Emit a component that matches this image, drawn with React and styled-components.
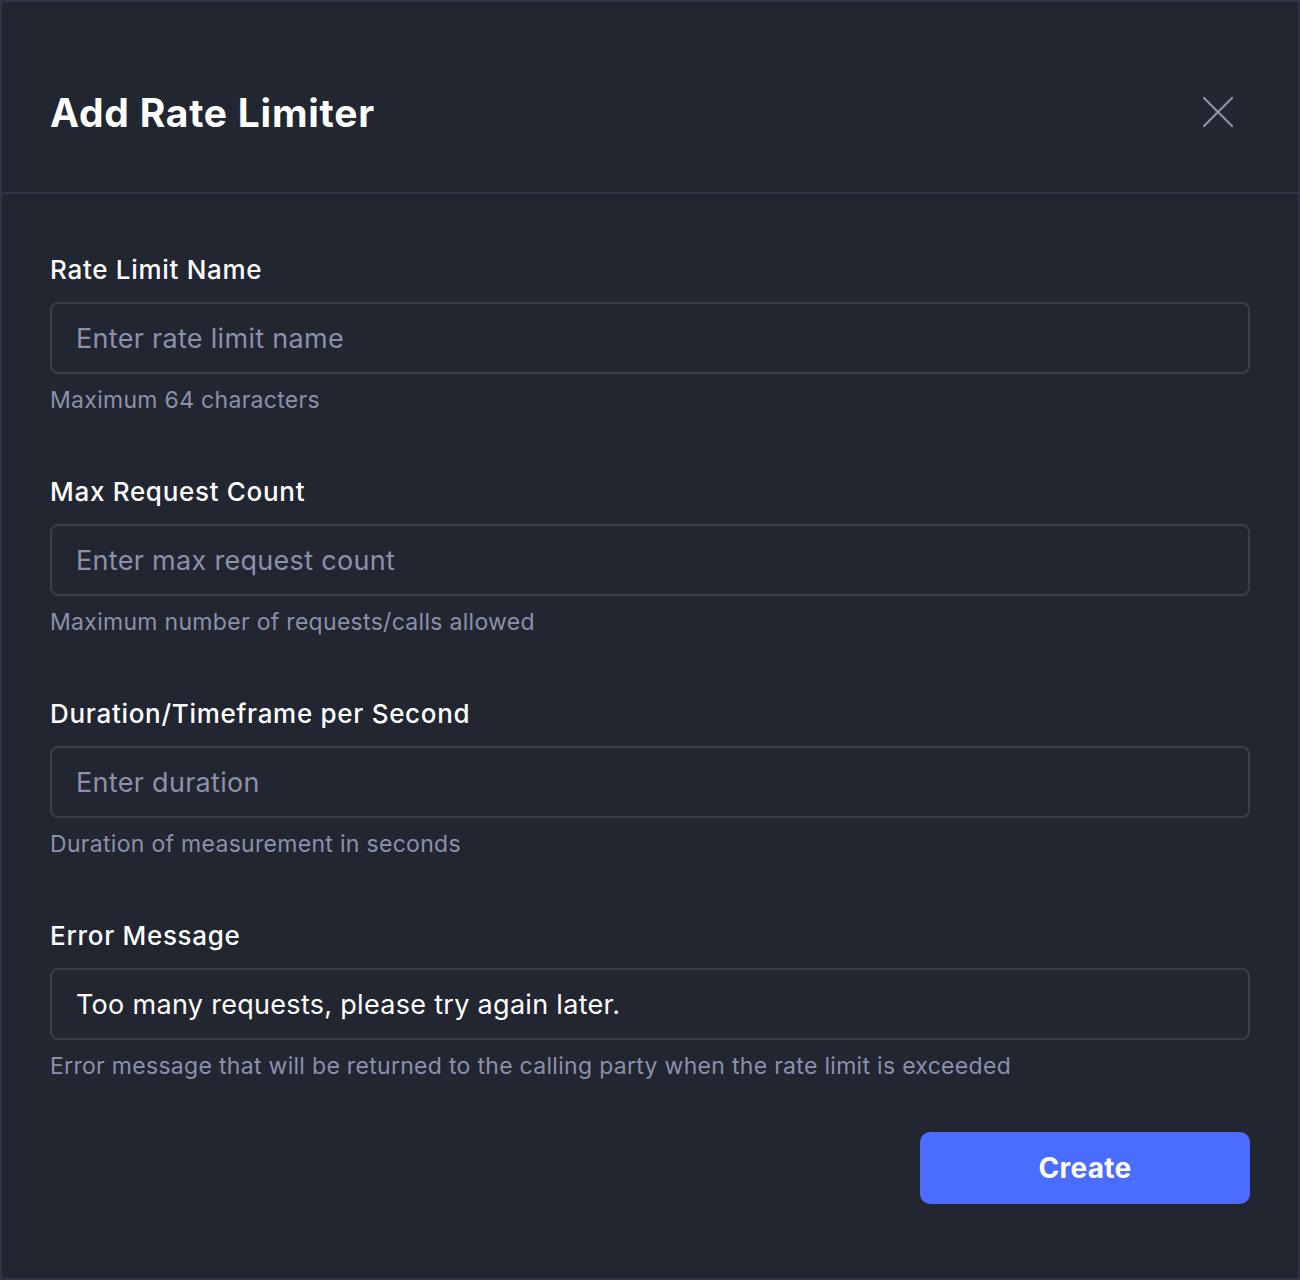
import React from 'react'
import styled, { createGlobalStyle } from 'styled-components'

const GlobalStyle = createGlobalStyle`
  body {
    margin: 0;
    background: #222631;
    font-family: Inter, "Noto Sans", sans-serif;
  }
`

const fields = [
  { label: 'Rate Limit Name', placeholder: 'Enter rate limit name', help: 'Maximum 64 characters' },
  { label: 'Max Request Count', placeholder: 'Enter max request count', help: 'Maximum number of requests/calls allowed' },
  { label: 'Duration/Timeframe per Second', placeholder: 'Enter duration', help: 'Duration of measurement in seconds' },
  {
    label: 'Error Message',
    placeholder: '',
    value: 'Too many requests, please try again later.',
    help: 'Error message that will be returned to the calling party when the rate limit is exceeded',
  },
]

export default function App() {
  return (
    <>
      <GlobalStyle />
      <Modal>
        <Header>
          <Title>Add Rate Limiter</Title>
          <CloseButton aria-label="Close">
            <svg width="32" height="32" viewBox="0 0 32 32" fill="none">
              <path d="M2 2L30 30M30 2L2 30" stroke="#8990a8" strokeWidth="2.4" strokeLinecap="round" />
            </svg>
          </CloseButton>
        </Header>
        <Body>
          {fields.map((f) => (
            <Field key={f.label}>
              <Label>{f.label}</Label>
              <Input placeholder={f.placeholder} defaultValue={f.value} />
              <Help>{f.help}</Help>
            </Field>
          ))}
          <Actions>
            <CreateButton>Create</CreateButton>
          </Actions>
        </Body>
      </Modal>
    </>
  )
}

const Modal = styled.div`
  width: 1300px;
  height: 1280px;
  box-sizing: border-box;
  border: 2px solid #2f3345;
  background: #222631;
  display: flex;
  flex-direction: column;
`

const Header = styled.header`
  height: 192px;
  box-sizing: border-box;
  border-bottom: 2px solid #2f3345;
  display: flex;
  align-items: center;
  justify-content: space-between;
  padding: 30px 64px 0 48px;
`

const Title = styled.h1`
  margin: 0;
  color: #ffffff;
  font-size: 39px;
  font-weight: 700;
  letter-spacing: 0.75px;
`

const CloseButton = styled.button`
  background: none;
  border: none;
  padding: 0;
  cursor: pointer;
  display: flex;
`

const Body = styled.div`
  padding: 60px 48px 0;
  display: flex;
  flex-direction: column;
`

const Field = styled.div`
  display: flex;
  flex-direction: column;
  & + & {
    margin-top: 62px;
  }
`

const Label = styled.label`
  color: #ffffff;
  font-size: 26px;
  font-weight: 500;
  line-height: 32px;
  letter-spacing: 0.7px;
  margin-bottom: 16px;
`

const Input = styled.input`
  height: 72px;
  box-sizing: border-box;
  background: transparent;
  border: 2px solid #3b3e48;
  border-radius: 8px;
  padding: 0 24px;
  font-family: Inter, "Noto Sans", sans-serif;
  font-size: 27px;
  letter-spacing: 0.3px;
  color: #ffffff;
  outline: none;
  &::placeholder {
    color: #8a91aa;
  }
`

const Help = styled.span`
  color: #8a91aa;
  font-size: 23px;
  line-height: 28px;
  letter-spacing: 0.3px;
  margin-top: 12px;
`

const Actions = styled.div`
  display: flex;
  justify-content: flex-end;
  margin-top: 52px;
`

const CreateButton = styled.button`
  width: 330px;
  height: 72px;
  border: none;
  border-radius: 10px;
  background: #4a6cff;
  color: #ffffff;
  font-family: Inter, "Noto Sans", sans-serif;
  font-size: 28px;
  font-weight: 700;
  letter-spacing: 0.3px;
  cursor: pointer;
`
